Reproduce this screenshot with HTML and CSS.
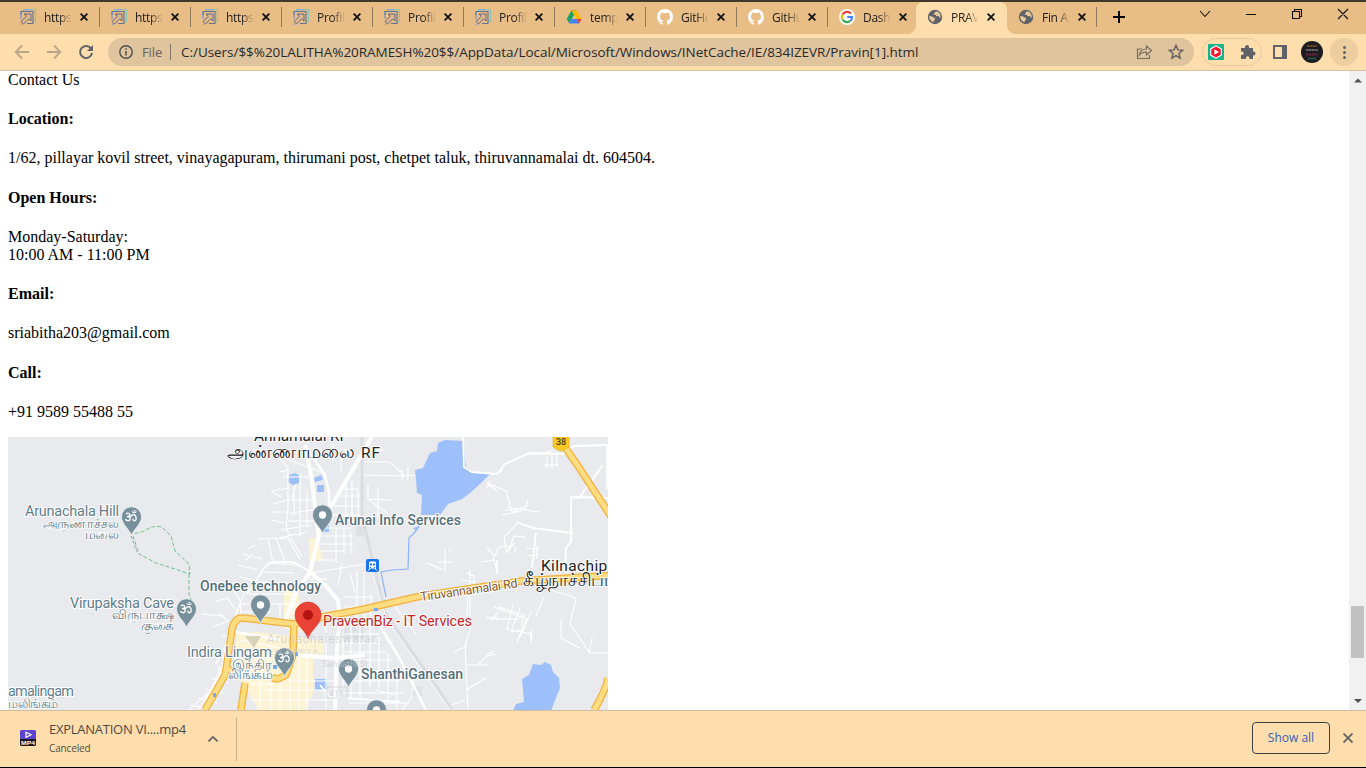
FILE: index.html
```html
<!DOCTYPE html>
<html lang="en">
<head>
<meta charset="utf-8">
<title>PRAVEEN</title>
<link rel="stylesheet" href="styles.css">
</head>
<body>
<svg class="defs" width="0" height="0">
  <symbol id="arrow" viewBox="0 0 16 16"><path d="M3.500 3V.7h11.800v12H13" fill="none" stroke="#74c4bd" stroke-width="1"/><path d="M3.500.7h7" stroke="#82a4e0"/><path d="M1 6V2.500h12v12H7" fill="none" stroke="#62718f" stroke-width="1.100"/><path d="M1 10V3M1 15l1 .5" stroke="#5e87db"/><path d="M4 5h7v7L8.800 9.800 3.500 15 1 12.500 6.300 7.300z" fill="#dfb98e" stroke="#64647f"/></symbol>
  <symbol id="gh" viewBox="0 0 16 16"><circle cx="8" cy="8" r="8" fill="#fff"/><path d="M5.800 16v-2.400c-2.200.5-2.700-1-3.500-1.700 1.300-.2 1.500 1.200 3.500.8.100-.6.300-.9.600-1.100-2-.3-3.400-1.100-3.400-3.800 0-.9.300-1.600.8-2.200-.2-.7-.2-1.500.1-2.200.8 0 1.600.4 2.200.9a8 8 0 0 1 3.800 0c.7-.5 1.400-.9 2.200-.9.300.7.300 1.500.1 2.200.5.600.8 1.300.8 2.200 0 2.700-1.500 3.500-3.400 3.800.4.300.6.900.6 1.700V16z" fill="#e9be86"/></symbol>
  <symbol id="globe" viewBox="0 0 16 16"><circle cx="8" cy="8" r="7.200" fill="#5f6368"/><path d="M2.300 7c2 .2 3 .2 3.500 1.200 1.500.2 2.500.7 2.300 2-.7.800-1.300 1.100-1.400 2.900C4 12.700 1.900 10 2.300 7zM8.700 2.300c-.7 1-.3 1.700-1.700 1.900-.5 1.200.2 1.600 1.500 1.500.8.200.5 1.200 1.300 1.500.8.400 1.700-.7 2.300.2.400.8.700 1.200 1.500 1.300C14.300 5 12 2.600 8.700 2.300z" fill="#e8c99d"/></symbol>
  <symbol id="x" viewBox="0 0 8 8"><path d="M.6.600l6.800 6.800M7.400.600L.6 7.400" stroke="#111" stroke-width="1.800"/></symbol>
  <symbol id="pin" viewBox="0 0 22 30"><path d="M11 29.500C9.500 24 1 18 1 10.800a10 10 0 0 1 20 0C21 18 12.500 24 11 29.500z" fill="#78909c" stroke="#f3f5f6" stroke-width=".7"/></symbol>
  <symbol id="dot" viewBox="0 0 22 30"><use href="#pin"/><circle cx="11" cy="11" r="3.700" fill="#fff"/></symbol>
  <symbol id="om" viewBox="0 0 22 30"><use href="#pin"/><path d="M5.500 8c2-1.700 4.700-.3 3.500 1.700-.5.800-1.500 1-2.500 1 2.500 0 4 1.200 3 3-1 1.700-4 1.200-4.500-.7M9 11c2-.2 2-2.500 4-2.300 3 .3 3.500 5 1.500 6-1.500.8-2.500-.8-1.700-2M11.500 5.500c1 1.500 3.500 1.500 4.500 0" fill="none" stroke="#fff" stroke-width="1.300"/><circle cx="14" cy="4.800" r=".9" fill="#fff"/></symbol>
</svg>

<header class="tabs">
  <div class="tab"><svg class="fav"><use href="#arrow"/></svg><span>https</span><svg class="close"><use href="#x"/></svg></div>
  <div class="tab"><svg class="fav"><use href="#arrow"/></svg><span>https</span><svg class="close"><use href="#x"/></svg></div>
  <div class="tab"><svg class="fav"><use href="#arrow"/></svg><span>https</span><svg class="close"><use href="#x"/></svg></div>
  <div class="tab"><svg class="fav"><use href="#arrow"/></svg><span>Profil</span><svg class="close"><use href="#x"/></svg></div>
  <div class="tab"><svg class="fav"><use href="#arrow"/></svg><span>Profil</span><svg class="close"><use href="#x"/></svg></div>
  <div class="tab"><svg class="fav"><use href="#arrow"/></svg><span>Profil</span><svg class="close"><use href="#x"/></svg></div>
  <div class="tab"><svg class="fav" viewBox="0 0 16 16"><path d="M5.500 1.500h5L8 6z" fill="#188038"/><path d="M5.500 1.500L8 6l-4.700 8.200L.6 10z" fill="#1ea362"/><path d="M5.500 1.500h5L15.500 10h-5z" fill="#ffba00"/><path d="M5.500 10h10l-2.500 4.500H3z" fill="#4285f4"/><path d="M10.500 10h5L13 14.500z" fill="#ea4335"/></svg><span>temp</span><svg class="close"><use href="#x"/></svg></div>
  <div class="tab"><svg class="fav"><use href="#gh"/></svg><span>GitHu</span><svg class="close"><use href="#x"/></svg></div>
  <div class="tab"><svg class="fav"><use href="#gh"/></svg><span>GitHu</span><svg class="close"><use href="#x"/></svg></div>
  <div class="tab last"><svg class="fav" viewBox="0 0 16 16"><circle cx="8" cy="8" r="8" fill="#fff"/><g fill="none" stroke-width="2.200"><path d="M12 4.600A5.200 5.200 0 0 0 3.500 5.500" stroke="#ea4335"/><path d="M3.500 5.500a5.200 5.200 0 0 0 0 5" stroke="#fbbc05"/><path d="M3.500 10.500a5.200 5.200 0 0 0 8 1.300" stroke="#34a853"/><path d="M11.500 11.800A5.200 5.200 0 0 0 13.100 8H8.200" stroke="#4285f4"/></g></svg><span>Dash</span><svg class="close"><use href="#x"/></svg></div>
  <div class="tab active"><svg class="fav"><use href="#globe"/></svg><span>PRAV</span><svg class="close"><use href="#x"/></svg></div>
  <div class="tab fin"><svg class="fav"><use href="#globe"/></svg><span>Fin A</span><svg class="close"><use href="#x"/></svg></div>
  <svg class="plus" viewBox="0 0 12 12"><path d="M6 0v12M0 6h12" stroke="#000" stroke-width="2"/></svg>
  <svg class="winctl" viewBox="0 0 158 20"><g fill="none" stroke="#111" stroke-width="1.100"><path d="M5 9l5 5.500L15 9M51 12.500h10M97.500 9.500h7v7h-7zM99.500 9V7.500h7v7H105M143 7l10 10M153 7l-10 10"/></g></svg>
</header>

<nav class="toolbar">
  <svg class="navs" viewBox="0 0 108 36"><g fill="none" stroke-width="1.800"><path d="M29 18H16M22 11.500L15.700 18l6.300 6.500M47 18h13M54 11.500l6.300 6.500-6.300 6.500" stroke="#bba58a"/><path d="M91 14.500A6 6 0 1 0 92 19" stroke="#5f6368" stroke-width="2"/></g><path d="M93 11v6h-6z" fill="#5f6368"/></svg>
  <div class="omnibox">
    <svg class="info" viewBox="0 0 14 14"><circle cx="7" cy="7" r="6.200" fill="none" stroke="#4c4e52" stroke-width="1.400"/><path d="M7 6v4.500M7 3.300v1.500" stroke="#4c4e52" stroke-width="1.500"/></svg>
    <span class="scheme">File</span><i></i>
    <span class="url">C:/Users/$$%20LALITHA%20RAMESH%20$$/AppData/Local/Microsoft/Windows/INetCache/IE/834IZEVR/Pravin[1].html</span>
    <svg class="acts" viewBox="0 0 56 28"><g fill="none" stroke="#746b60" stroke-width="1.200"><path d="M6 11H1.500v9.500h12V17M3.500 17c.5-4.500 3-6 7-6V8l5 4.500-5 4.500v-3c-3 0-5 .5-7 3z"/><path d="M40 7.500l1.900 4.400 4.700.4-3.600 3.100 1.100 4.700-4.100-2.500-4.100 2.500 1.100-4.700-3.600-3.100 4.700-.4z" stroke-width="1.500" stroke="#65625f"/></g></svg>
  </div>
  <div class="ext">
    <svg width="16" height="16" viewBox="0 0 16 16"><rect width="16" height="16" rx="1" fill="#18b38d"/><path d="M8 1.300l5.800 3.300v6.800L8 14.700l-5.800-3.300V4.600z" fill="#fff"/><path d="M8 2.500l4.700 2.800v5.400L8 13.500l-4.700-2.800V5.300z" fill="#f5142a"/><path d="M6.300 5.300L11 8l-4.700 2.700z" fill="#fff"/></svg>
    <svg width="16" height="16" viewBox="0 0 16 16"><path d="M1 4h4V3a2 2 0 0 1 4 0v1h4v3.500h.5a2 2 0 0 1 0 4H13V15H9.500v-1a1.800 1.800 0 0 0-3.600 0v1H1v-4h1a1.700 1.700 0 0 0 0-3.500H1z" fill="#5f6368"/></svg>
  </div>
  <svg class="side" viewBox="0 0 14 14"><path d="M1 1h12v12H1z" fill="none" stroke="#5f6368" stroke-width="2"/><path d="M9 0h5v14H9z" fill="#5f6368"/></svg>
  <svg class="avatar" viewBox="0 0 22 22"><circle cx="11" cy="11" r="11" fill="#1d1c20"/><g fill="none" stroke-width="2.200" stroke-dasharray="2.400 .4"><path d="M6 5h10" stroke="#6c442a"/><path d="M5 9h12" stroke="#67646a"/><path d="M5 13.500h12" stroke="#6c2439"/><path d="M7 17.500h8" stroke="#225a54"/></g></svg>
  <div class="menu"><b></b><b></b><b></b></div>
</nav>

<main class="view">
  <article class="page">
    <div class="lead">Contact Us</div>
    <h4>Location:</h4>
    <p>1/62, pillayar kovil street, vinayagapuram, thirumani post, chetpet taluk, thiruvannamalai dt. 604504.</p>
    <h4>Open Hours:</h4>
    <p>Monday-Saturday:<br>10:00 AM - 11:00 PM</p>
    <h4>Email:</h4>
    <p>sriabitha203@gmail.com</p>
    <h4>Call:</h4>
    <p>+91 9589 55488 55</p>
    <svg class="map" viewBox="8 437 600 273">
      <rect x="8" y="437" width="600" height="273" fill="#e8eaed"/>
      <!-- built-up areas -->
      <g fill="#fdf3d5"><path d="M237 634l20-2 50 6 6 5v50l-8 17h-47l-14-28-12-3z"/><path d="M284 590l14 2 6 40-20-4zM310 538h10v10l3 12-14 2zM302 640h22v18h-22z"/></g>
      <g fill="#dfe1e5"><path d="M340 625h24v14h-24zM356 524h8v12h-8zM412 686h10v10h-10z"/></g>
      <!-- water -->
      <g fill="#9dc0fb"><path d="M438 443l7-3 18 1 3 26 7 5 17 2-8 8-12 11-8 6-14 5-8 11h-19l1-20-5-2-1-14-1-9 8-2 7-15 7-2z"/><path d="M522 679l7-4 4-11 8 1 4-3 6 3 2 7 6 6 1 10-6 15-3 8h-38l3-7 8-2z"/><path d="M289 475l6-2 5 3-1 7-6 2-5-3zM314 478l7-3 2 5-8 2zM317 485h7v7h-7zM324 526h5v6h-5zM315 679h12v11h-12zM413 528l7-2-4 5z"/></g>
      <path d="M419 526l-4 6-6 6-1 31-16 1-11 2 5 25" fill="none" stroke="#8ab4f8" stroke-width="1.200"/>
      <!-- lanes -->
      <g class="lane">
        <path d="M280 459l8 8v42l-2 20 16 28M288 470l-9 2M289 488l-18 3M288 500l-15 4M286 512h-15M285 523l-14-3M288 500h26M290 513l24-3M288 521h26M281 530l30-5M279 538l28-6M258 539l30-1 12 22M255 545l-8 4M253 555l-8 5M294 487v29M300 474v62M307 492v36M267 563l30 2M264 572l30 1M260 582l32 1M276 538l10 26M268 538l5 25M262 559l-20-5M258 570l-20-5M252 580l-12-3M281 457l40 15M283 477h29M296 484l-4 14M271 491l10 6"/>
        <path d="M340 489h18M337 496h23M334 506h26M330 515h30M346 483v32M352 480v40M358 487v33M333 443v20M341 449v23M363 450h22M362 462h28l14 13M360 475l44 1 11-1M402 470v11M408 467v13M368 485v14l24 1M378 487v30M368 499l20 15M319 528h33M325 536h28M321 544h33M320 551h24M336 530v33M344 528v26M351 533v20M318 560h16"/>
        <path d="M311 573l54-9M309 579h20M342 563l-4 23M350 573l5 20M357 571v58M364 572v48M371 594v22M344 597h29M344 607h37M380 595l5 15M390 600l26 34"/>
        <path d="M343 625v62M351 622v76M360 626v74M370 623v64M379 637v52M388 653v50M397 673v37M344 634h35M344 643h35M343 652h43M343 660h49M344 671h49M343 681h58M342 693h62M349 703h60M375 690l20 5M415 676l-4 22-9 12"/>
        <path d="M230 585l10 15 1 16-8 17-2 18-8 15-8 21-27 24M246 588l-9 24-11 31-5 31-23 36M215 602l12-4 11 14M202 614l22 2M219 613l9 8-15 6M222 635l13 4M225 645l-10 20M224 653l15 7M217 667l15 6M211 678l17 5M205 689l18 4M198 698l19 5M190 705l18 4M222 666l-18 39M230 670l-21 37"/>
        <path d="M249 594h49M241 604h58M241 612h30M280 604v16M294 597v20M260 607v11M240 640l40 8M245 660h35M271 680v30M280 680v30M290 675v35M299 638v72M307 650v60M326 625v85M265 690h63M250 700h85M289 681h50M260 681v26M244 684h30"/>
        <path d="M546 451h6v18M543 465h15M547 457v12M557 452v14M487 483l19 8 5 17 29 4M507 505l5 6 16-5M525 510l3-10M505 510l13 1M502 515l20-4M487 483l10 8M490 481l-3 7M445 549v23M437 562h15M448 550l4 1M443 570l-16-7M481 562l12-2 6-13 11-1 4-10 12 1M494 560l4 14M487 548l8 8M526 549l14-1M537 546v13M527 556l11-1M515 547v6M506 550l-2-13 14-14"/>
        <path d="M498 607l26 8-3 12M489 619h30M499 612l-8 8M513 604l-6 26M520 608l-8 21M531 612l-11 25M505 629l27 5-1 9M527 618l-10 24M486 617l12 1M494 607l33 12M510 632l15-3M531 630v11M470 570v62M466 573l8 3v10l-6 5-1 25M470 630l-5 15 3 64M475 582l-14-2M467 646l-13 6M478 665l9-9 10-2M465 665h23M487 655l6-4M466 690l20-12M451 705l14-5M545 588l31 10-6 26 20 29h18M544 597l-8 19M567 575l11 12M589 653l3-15M561 620v18l19 10"/>
      </g>
      <path d="M362 437v78l23 98 67 96" fill="none" stroke="#dadce0" stroke-width="3"/>
      <path d="M372 573l15 47 63 90" fill="none" stroke="#f8f9fa" stroke-width="1"/>
      <g fill="none" stroke="#fff" stroke-width="4" stroke-linejoin="round"><path d="M305 445l7 35 5 45 2 10-9 37-13 18-12 32M372 437l-42 71-12 27M309 571l16 14 13 15 2 20-3 30-2 60M297 655l38 3 30-3" /><path d="M308 450l17 25 4 17v18M236 632l44 8M337 624l44-3M380 626l20 33 26 51" stroke-width="2.500"/></g>
      <g fill="none" stroke="#fff" stroke-width="1.800"><path d="M463 437l1 30 8 5 25 2 8-10 25-11 33 1 11-8 34-1M550 453l-22 1M497 474l6-5M607 444v45M603 465l-24 33-8-1v45l-5 6-1 22M608 498l-34-1M516 522l17 6 40 5M536 533l-4 35M497 574v-14M506 553l8-10M320 685l10 12 70 5M247 594l14-21q4-8 12-11h20l16 9" /></g>
      <!-- arterial roads -->
      <g class="road"><path id="r1" d="M205 710l20-35q5-30 7-46 3-12 11-11l51 6 28-7 38-7 61-14 100-15 95-6M294 625l-1 30-7 20-8 4-6-1M226 668l8 4M241 710l4-27M560 440l18 26 34 52M594 710q12-20 14-32"/></g>
      <g class="roadfill"><use href="#r1"/></g>
      <path d="M133 536l6 18 17 9 19 6 15 5-1-10-14-13-4-15-9-9q-11-2-17 4l-12 3M189 574v20l7 19" fill="none" stroke="#70c08b" stroke-width="1" stroke-dasharray="4 2"/>
      <path d="M131 536l6 16" stroke="#9aa2a8" stroke-dasharray="3 2"/>
      <path d="M245 636h16l-7 12z" fill="#d8d4bc"/>
      <g fill="#75a8f4"><path d="M273 665h4v4h-4zM213 693h3v4h-3zM374 608h4v3h-4zM295 652h3v4h-3z"/></g>
      <!-- markers -->
      <use href="#om" x="120.500" y="506" width="22" height="30"/>
      <use href="#om" x="175.500" y="598" width="22" height="30"/>
      <use href="#om" x="273.500" y="647" width="22" height="30"/>
      <use href="#dot" x="311.500" y="504" width="22" height="30"/>
      <use href="#dot" x="249.500" y="594" width="22" height="30"/>
      <use href="#dot" x="337.500" y="658" width="22" height="30"/>
      <use href="#dot" x="365.500" y="699" width="22" height="30"/>
      <path d="M308 639c-2-9-13-14-13-24a13 13 0 0 1 26 0c0 10-11 15-13 24z" fill="#ea4335" stroke="#d13b30" stroke-width=".7"/><circle cx="308" cy="615" r="5" fill="#b31412"/>
      <rect x="366" y="559" width="13" height="13" rx="2" fill="#1a73e8"/><path d="M369 562q3.500-1.500 7 0v6.500h-7z" fill="#fff"/><path d="M370 563.500h2v2h-2zM373 563.500h2v2h-2zM370 567h1v1h-1zM374 567h1v1h-1z" fill="#1a73e8"/><path d="M370 568l-1.500 2.500M375 568l1.500 2.500" stroke="#fff"/>
      <path d="M553 437h16v10q-4 3-8 4-4-1-8-4z" fill="#fbc927" stroke="#e3ae20" stroke-width=".6"/>
      <text x="561" y="445" font-size="9" text-anchor="middle" font-weight="500" fill="#4b3c0d">38</text>
      <!-- labels -->
      <g class="faded"><text x="267" y="643" font-size="12" textLength="120">Arunachaleswarar...</text><text x="270" y="654" font-size="11">அருணாச்...</text><text x="322" y="667" font-size="9">Sannathi St</text><path d="M327 687h20v11h-20z" fill="none" stroke="#c9cbcd"/><text x="329" y="697" font-size="9">411</text></g>
      <g class="dark" font-size="15.500"><text x="254" y="441" textLength="94">Annamalai RF</text><text class="ta" x="227" y="458" font-size="18" textLength="128" lengthAdjust="spacingAndGlyphs">அண்ணாமலை</text><text x="361" y="458" textLength="19">RF</text><text x="541" y="571" textLength="75">Kilnachipa</text><text class="ta" x="523" y="586" font-size="18" textLength="93" lengthAdjust="spacingAndGlyphs">கீழ்நாச்சிப்ப</text></g>
      <g class="place" font-size="14.500">
        <text x="25" y="516" textLength="94">Arunachala Hill</text><text class="ta" x="43" y="528" font-size="13" textLength="76" lengthAdjust="spacingAndGlyphs">அருணாச்சல</text><text class="ta" x="85" y="539" font-size="13" textLength="34" lengthAdjust="spacingAndGlyphs">மலை</text>
        <text x="70" y="608" textLength="104">Virupaksha Cave</text><text class="ta" x="112" y="619" font-size="13" textLength="62" lengthAdjust="spacingAndGlyphs">விருபாக்ஷ</text><text class="ta" x="141" y="630" font-size="13" textLength="33" lengthAdjust="spacingAndGlyphs">குகை</text>
        <text x="187" y="657" textLength="85">Indira Lingam</text><text class="ta" x="232" y="669" font-size="13" textLength="40" lengthAdjust="spacingAndGlyphs">இந்திர</text><text class="ta" x="228" y="679" font-size="13" textLength="44" lengthAdjust="spacingAndGlyphs">லிங்கம்</text>
        <text x="8" y="696" textLength="66">amalingam</text><text class="ta" x="8" y="708" font-size="13" textLength="50" lengthAdjust="spacingAndGlyphs">மலிங்கம்</text>
      </g>
      <g class="place biz" font-size="14"><text x="335" y="525" textLength="126">Arunai Info Services</text><text x="200" y="591" textLength="121">Onebee technology</text><text x="361" y="679" textLength="102">ShanthiGanesan</text></g>
      <text class="red" x="323" y="626" textLength="149">PraveenBiz - IT Services</text>
      <text class="street" transform="translate(421 601) rotate(-8)" textLength="98">Tiruvannamalai Rd</text>
    </svg>
  </article>
  <aside class="scroll"><svg viewBox="0 0 17 639"><path d="M5 11.500h8L9 7.500zM5 628h8l-4 4z" fill="#505050"/><path d="M2 535h13v52H2z" fill="#c1c1c1"/></svg></aside>
</main>

<footer class="shelf">
  <svg class="mp4" viewBox="0 0 16 16"><path d="M0 1l1-1h14l1 1v8H0z" fill="#5b45cf"/><path d="M0 9h16v6l-1 1H1l-1-1z" fill="#17171c"/><path d="M6 2.300v5L11 4.800z" fill="none" stroke="#fff" stroke-width="1.200"/><text x="1" y="15" textLength="14" lengthAdjust="spacingAndGlyphs">MP4</text></svg>
  <div class="file"><div>EXPLANATION VI....mp4</div><small>Canceled</small></div>
  <svg class="chev" viewBox="0 0 10 6"><path d="M.5 5.300L5 1l4.500 4.300" fill="none" stroke="#5f6368" stroke-width="1.700"/></svg>
  <i></i>
  <button>Show all</button>
  <svg class="bye" viewBox="0 0 10 10"><path d="M.5.500l9 9M9.500.500l-9 9" stroke="#5f6368" stroke-width="1.800"/></svg>
</footer>
</body>
</html>
```
FILE: styles.css
```css
* { box-sizing: border-box; }
body { margin: 0; width: 1366px; height: 768px; overflow: hidden; display: flex; flex-direction: column; background: #fff; font-family: "Open Sans", "Noto Sans", sans-serif; }
svg { display: block; flex: none; }
.defs { position: absolute; }
.tabs { height: 34px; flex: none; border-top: 2px solid #41382c; background: #e9be86; display: flex; align-items: flex-start; padding-left: 9px; font-size: 12px; color: #22201d; }
.tab { width: 91px; height: 32px; flex: none; display: flex; align-items: center; padding: 0 0 2px 11px; background: linear-gradient(#8f7859, #8f7859) 100% 5px / 1px 20px no-repeat; }
.tab span { width: 28px; margin: 0 8px; overflow: hidden; white-space: nowrap; letter-spacing: -.3px; -webkit-mask-image: linear-gradient(90deg, #000 55%, transparent); mask-image: linear-gradient(90deg, #000 55%, transparent); }
.fav { width: 16px; height: 16px; }
.close { width: 8px; height: 8px; }
.tab.last { background: none; }
.tab.active { width: 91px; margin-left: -3px; background: #ffdead; border-radius: 7px 7px 0 0; position: relative; }
.tab.active::before, .tab.active::after { content: ""; position: absolute; bottom: 0; width: 8px; height: 8px; }
.tab.active::before { left: -8px; background: radial-gradient(circle at 0 0, transparent 7.500px, #ffdead 8px); }
.tab.active::after { right: -8px; background: radial-gradient(circle at 100% 0, transparent 7.500px, #ffdead 8px); }
.tab.fin { width: 90px; }
.plus { width: 12px; height: 12px; margin: 9px 0 0 16px; }
.winctl { width: 158px; height: 20px; margin: 0 13px 0 auto; }
.toolbar { height: 37px; flex: none; background: #ffdead; border-bottom: 1px solid #d9c1a0; display: flex; align-items: center; }
.navs { width: 108px; height: 36px; }
.omnibox { width: 1086px; height: 28px; border-radius: 14px; background: #dfc49d; display: flex; align-items: center; padding-left: 11px; color: #29292b; }
.info { width: 14px; height: 14px; }
.scheme { width: 23px; margin-left: 9px; font-size: 13px; color: #65625f; letter-spacing: -.1px; }
.omnibox i { width: 1px; height: 16px; background: #85796b; margin: 0 10px 0 5px; }
.url { width: 740px; font-size: 13.500px; letter-spacing: -.04px; white-space: nowrap; }
.acts { width: 56px; height: 28px; margin: 0 2px 0 auto; }
.ext { width: 60px; height: 28px; margin-left: 8px; border: 1px solid #e9c99c; border-radius: 14px; display: flex; align-items: center; gap: 16px; padding-left: 5px; }
.side { width: 14px; height: 14px; margin-left: 11px; }
.avatar { width: 22px; height: 22px; margin-left: 14px; }
.menu { width: 28px; height: 28px; margin-left: 7px; border-radius: 50%; background: #edcea0; display: flex; flex-direction: column; align-items: center; justify-content: center; gap: 2px; }
.menu b { width: 3px; height: 3px; border-radius: 50%; background: #5f6368; }
.view { height: 639px; flex: none; display: flex; overflow: hidden; }
.page { width: 1349px; padding: 0 8px; font: 16px "Liberation Serif", serif; color: #000; }
.lead { margin-top: -.2px; }
.page h4 { margin: 21.280px 0; font-size: 16px; }
.page p { margin: 16px 0; }
.map { width: 600px; height: 273px; font-family: Roboto, "Noto Sans", sans-serif; }
.lane { fill: none; stroke: #fff; stroke-width: 1.100; }
.road { fill: none; stroke: #f2b03a; stroke-width: 7.500; stroke-linejoin: round; }
.roadfill { fill: none; stroke: #fddc82; stroke-width: 5; stroke-linejoin: round; }
.map text { paint-order: stroke; }
.dark { fill: #202124; stroke: #fff; stroke-width: 2px; }
.place { fill: #5f7c8a; stroke: #fff; stroke-width: 2px; }
.ta { stroke-width: 1.500px; }
.biz { fill: #546e7a; font-weight: 500; }
.red { fill: #c5221f; stroke: #fff; stroke-width: 2px; font-size: 14.500px; }
.street { fill: #865623; stroke: #fff; stroke-width: 2px; font-size: 12.500px; }
.faded { fill: #c9cbcd; opacity: .7; }
.scroll { width: 17px; background: #f1f1f1; }
.scroll svg { width: 17px; height: 639px; }
.shelf { height: 58px; flex: none; background: #ffdead; border-top: 1px solid #d4bd9b; border-bottom: 1px solid #000; display: flex; align-items: center; color: #514a41; }
.mp4 { width: 16px; height: 16px; margin: 0 13px 2px 20px; }
.mp4 text { font: bold 6px "Liberation Sans", sans-serif; fill: #fff; }
.file { width: 137px; padding-top: 1px; white-space: nowrap; font-size: 13px; letter-spacing: -.25px; line-height: 18px; }
.file small { display: block; font-size: 10px; line-height: 21px; letter-spacing: -.15px; }
.chev { width: 10px; height: 6px; margin-left: 22px; }
.shelf i { width: 1px; height: 44px; background: #cbb28c; margin-left: 18px; }
.shelf button { width: 78px; height: 32px; margin: 0 0 2px auto; padding: 0 0 2px; border: 1px solid #3f4043; border-radius: 4px; background: transparent; color: #3262b5; font: 12px "Open Sans", sans-serif; }
.bye { width: 10px; height: 10px; margin: 0 13px 2px; }
```
